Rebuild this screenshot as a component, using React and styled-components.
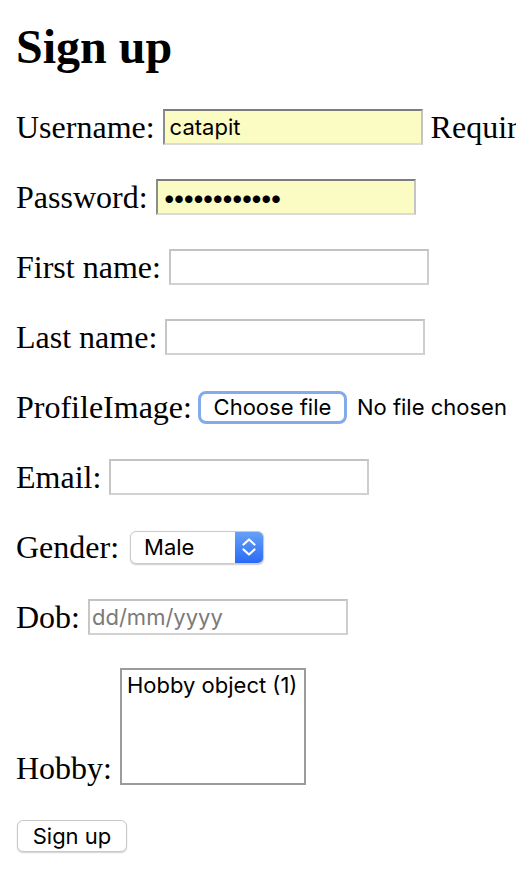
import React from 'react';
import styled, { createGlobalStyle } from 'styled-components';

const GlobalStyle = createGlobalStyle`
  html,
  body {
    margin: 0;
    padding: 0;
    background: #fff;
    overflow: hidden;
  }
  body {
    font-family: 'Liberation Serif', 'Times New Roman', serif;
    color: #000;
  }
`;

const controlFont = `'Inter', 'Liberation Sans', Arial, sans-serif`;

const Page = styled.div`
  padding: 19px 0 0 16px;
`;

const Title = styled.h1`
  margin: 0 0 34px;
  font-size: 48px;
  line-height: 55px;
  font-weight: bold;
`;

const Form = styled.form`
  display: flex;
  flex-direction: column;
  gap: 32px;
`;

const Row = styled.div`
  display: flex;
  align-items: ${(p) => (p.$bottom ? 'flex-end' : 'center')};
  gap: 8px;
  min-height: 38px;
  font-size: 32px;
  line-height: 38px;
  white-space: nowrap;
`;

const Label = styled.label`
  flex: none;
  margin-bottom: ${(p) => (p.$bottom ? '-2px' : '0')};
`;

const HelpText = styled.span`
  flex: none;
`;

const TextInput = styled.input`
  flex: none;
  box-sizing: border-box;
  width: 260px;
  height: 36px;
  margin: 0;
  padding: 0 ${(p) => (p.$tight ? '2px' : '5px')};
  border: 2px solid;
  border-color: ${(p) =>
    p.$filled ? '#7c7c7c #c4c4c4 #dadada #8c8c8c' : '#c3c3c3 #cdcdcd #d2d2d2 #c6c6c6'};
  border-radius: 0;
  background: ${(p) => (p.$filled ? '#fafcc4' : '#fff')};
  font-family: ${controlFont};
  font-size: ${(p) => (p.type === 'password' ? '24px' : '22px')};
  letter-spacing: ${(p) => (p.type === 'password' ? '-3.8px' : '0')};
  color: #000;
  outline: none;

  &::placeholder {
    color: #7a7a7a;
  }
`;

const FileField = styled.span`
  display: flex;
  align-items: center;
  gap: 10px;
  flex: none;
  font-family: ${controlFont};
  font-size: 22px;
  line-height: 26px;
`;

const FileButton = styled.button`
  box-sizing: border-box;
  width: 149px;
  height: 33px;
  margin: 0 0 0 -2px;
  padding: 0;
  border: 3px solid #84aaee;
  border-radius: 8px;
  background: #fff;
  font-family: ${controlFont};
  font-size: 22px;
  color: #000;
`;

const SelectBox = styled.span`
  display: flex;
  flex: none;
  box-sizing: border-box;
  width: 134px;
  height: 33px;
  margin-left: 3px;
  border: 1px solid #cacaca;
  border-radius: 6px;
  background: #fff;
  box-shadow: 0 1px 1.5px rgba(0, 0, 0, 0.2);
  overflow: hidden;
`;

const Select = styled.select`
  appearance: none;
  flex: 1;
  min-width: 0;
  margin: 0;
  padding: 0 0 0 13px;
  border: 0;
  background: transparent;
  font-family: ${controlFont};
  font-size: 22px;
  color: #000;
  outline: none;
`;

const Stepper = styled.span`
  display: flex;
  align-items: center;
  justify-content: center;
  width: 28px;
  background: linear-gradient(#66a1f8, #2a6bf5);
`;

const ListBox = styled.select`
  flex: none;
  box-sizing: border-box;
  width: 186px;
  height: 117px;
  margin: 0;
  padding: 0;
  border: 2px solid #9b9b9b;
  border-radius: 0;
  background: #fff;
  font-family: ${controlFont};
  font-size: 22px;
  color: #000;
  outline: none;
  overflow: hidden;

  option {
    padding: 2px 5px;
    background: #fff;
    color: #000;
  }
`;

const SubmitButton = styled.button`
  box-sizing: border-box;
  width: 110px;
  height: 32px;
  margin: 0 0 0 1px;
  padding: 0;
  border: 1px solid #c8c8c8;
  border-radius: 6px;
  background: #fff;
  box-shadow: 0 1px 1.5px rgba(0, 0, 0, 0.18);
  font-family: ${controlFont};
  font-size: 22px;
  color: #000;
`;

function Chevrons() {
  return (
    <svg width="14" height="20" viewBox="0 0 14 20" fill="none">
      <path
        d="M1.5 7.5 L7 2.5 L12.5 7.5 M1.5 12.5 L7 17.5 L12.5 12.5"
        stroke="#fff"
        strokeWidth="2.2"
        strokeLinecap="round"
        strokeLinejoin="round"
      />
    </svg>
  );
}

export default function App() {
  return (
    <Page>
      <GlobalStyle />
      <Title>Sign up</Title>
      <Form onSubmit={(e) => e.preventDefault()}>
        <Row>
          <Label htmlFor="id_username">Username:</Label>
          <TextInput id="id_username" type="text" defaultValue="catapit" $filled />
          <HelpText>Required. 150 characters or fewer. Letters, digits and @/./+/_ only.</HelpText>
        </Row>
        <Row>
          <Label htmlFor="id_password">Password:</Label>
          <TextInput id="id_password" type="password" defaultValue="catapit12345" $filled />
        </Row>
        <Row>
          <Label htmlFor="id_first_name">First name:</Label>
          <TextInput id="id_first_name" type="text" />
        </Row>
        <Row>
          <Label htmlFor="id_last_name">Last name:</Label>
          <TextInput id="id_last_name" type="text" />
        </Row>
        <Row>
          <Label htmlFor="id_profile_image">ProfileImage:</Label>
          <FileField>
            <FileButton type="button" id="id_profile_image">Choose file</FileButton>
            <span>No file chosen</span>
          </FileField>
        </Row>
        <Row>
          <Label htmlFor="id_email">Email:</Label>
          <TextInput id="id_email" type="text" />
        </Row>
        <Row>
          <Label htmlFor="id_gender">Gender:</Label>
          <SelectBox>
            <Select id="id_gender" defaultValue="M">
              <option value="M">Male</option>
              <option value="F">Female</option>
            </Select>
            <Stepper>
              <Chevrons />
            </Stepper>
          </SelectBox>
        </Row>
        <Row>
          <Label htmlFor="id_dob">Dob:</Label>
          <TextInput id="id_dob" type="text" placeholder="dd/mm/yyyy" $tight />
        </Row>
        <Row $bottom>
          <Label htmlFor="id_hobby" $bottom>Hobby:</Label>
          <ListBox id="id_hobby" multiple defaultValue={[]}>
            <option value="1">Hobby object (1)</option>
          </ListBox>
        </Row>
        <Row>
          <SubmitButton type="submit">Sign up</SubmitButton>
        </Row>
      </Form>
    </Page>
  );
}
